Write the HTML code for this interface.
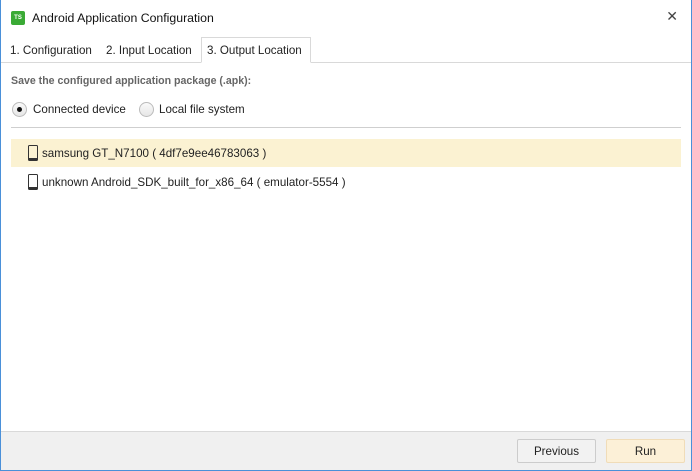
<!DOCTYPE html><html><head><style>
*{margin:0;padding:0;box-sizing:border-box}
body{width:692px;height:471px;overflow:hidden;font-family:"Liberation Sans",sans-serif;font-size:11.6px;color:#222;background:#fff;position:relative}
.win{position:absolute;left:0;top:0;width:692px;height:471px;border:1px solid #4a90d9;border-top:none}
.title{position:absolute;left:11px;top:10px;height:16px;display:flex;align-items:center;font-size:12.3px;color:#111}
.logo{width:14px;height:14px;background:#3aaa35;border-radius:2px;color:#fff;font-size:6px;font-weight:bold;display:flex;align-items:center;justify-content:center;margin-right:7px}
.close{position:absolute;right:14px;top:8px;font-size:14px;color:#444;font-weight:300}
.tabline{position:absolute;left:1px;right:1px;top:62px;border-top:1px solid #d9d9d9}
.tab{position:absolute;top:44px}
.tabsel{position:absolute;left:201px;top:37px;width:110px;height:26px;border:1px solid #d9d9d9;border-bottom:1px solid #fff;background:#fff}
.lbl{position:absolute;left:11px;top:75px;font-size:10.6px;font-weight:bold;color:#666}
.radio{position:absolute;top:102px;width:15px;height:15px;border-radius:50%;border:1px solid #bbb;background:linear-gradient(#fafafa,#e6e6e6)}
.dot{position:absolute;left:4px;top:4px;width:5px;height:5px;border-radius:50%;background:#111}
.sep{position:absolute;left:11px;right:11px;top:127px;border-top:1px solid #cfcfcf}
.row{position:absolute;left:11px;width:670px;height:28px;display:flex;align-items:center;padding-left:17px}
.ph{width:10px;height:16px;border:1.5px solid #333;border-radius:1.5px;margin-right:4px;border-bottom-width:3px}
.footer{position:absolute;left:1px;right:1px;top:431px;bottom:1px;background:#f0f0f0;border-top:1px solid #d9d9d9}
.btn{position:absolute;top:439px;height:24px;width:79px;border:1px solid #ccc;border-radius:2px;display:flex;align-items:center;justify-content:center}
</style></head><body>
<div class="win"></div>
<div class="title"><div class="logo">TS</div>Android Application Configuration</div>
<div class="close">✕</div>
<div class="tabline"></div>
<div class="tabsel"></div>
<div class="tab" style="left:10px">1. Configuration</div>
<div class="tab" style="left:106px">2. Input Location</div>
<div class="tab" style="left:207px">3. Output Location</div>
<div class="lbl">Save the configured application package (.apk):</div>
<div class="radio" style="left:12px"><div class="dot"></div></div>
<div style="position:absolute;left:33px;top:103px">Connected device</div>
<div class="radio" style="left:139px"></div>
<div style="position:absolute;left:159px;top:103px">Local file system</div>
<div class="sep"></div>
<div class="row" style="top:139px;background:#fbf2d2"><div class="ph"></div>samsung GT_N7100 ( 4df7e9ee46783063 )</div>
<div class="row" style="top:168px"><div class="ph"></div>unknown Android_SDK_built_for_x86_64 ( emulator-5554 )</div>
<div class="footer"></div>
<div class="btn" style="left:517px;background:#f2f2f2">Previous</div>
<div class="btn" style="left:606px;background:#fcf0d7;border-color:#f0dcb8">Run</div>
</body></html>
